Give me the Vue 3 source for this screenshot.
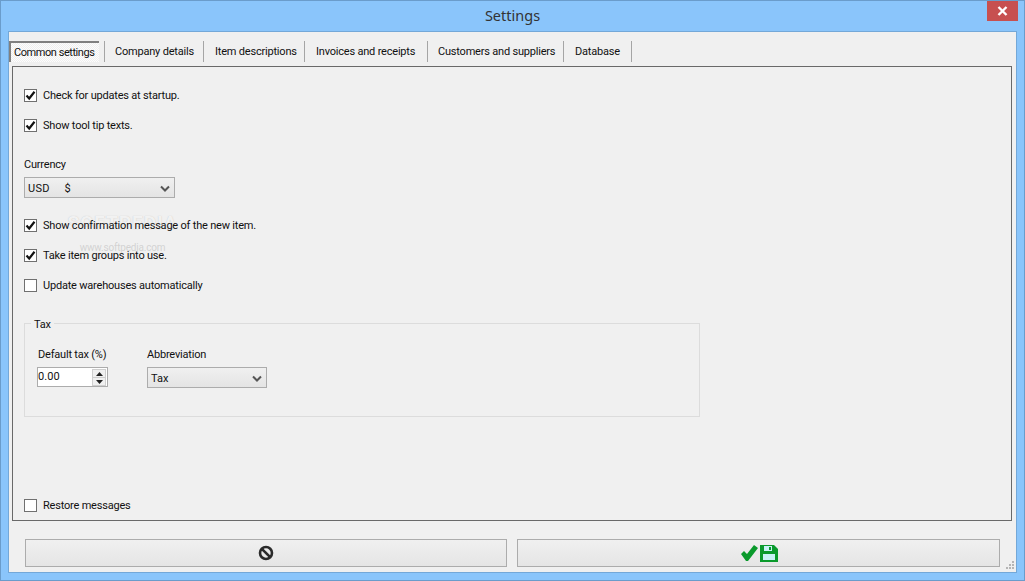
<script setup>
const tabs = [
  { label: 'Common settings', w: 90, active: true },
  { label: 'Company details', w: 100, pad: 10, first: true },
  { label: 'Item descriptions', w: 101, pad: 11 },
  { label: 'Invoices and receipts', w: 123, pad: 11 },
  { label: 'Customers and suppliers', w: 136, pad: 10 },
  { label: 'Database', w: 68, pad: 11 }
]
</script>

<template>
  <div class="window">
    <header class="titlebar">
      <span class="title">Settings</span>
      <button class="close" aria-label="Close">
        <svg width="11" height="10" viewBox="0 0 11 10"><path d="M1.5 1 9.5 9M9.5 1 1.5 9" stroke="#fff" stroke-width="2.4" fill="none"/></svg>
      </button>
    </header>
    <div class="client">
      <nav class="tabs">
        <div v-for="t in tabs" :key="t.label" class="tab" :class="{ active: t.active, first: t.first }" :style="{ width: t.w + 'px', paddingLeft: t.pad ? t.pad + 'px' : undefined }">
          <span>{{ t.label }}</span>
        </div>
      </nav>
      <main class="panel">
        <div class="watermark" aria-hidden="true">
          <span class="wm-big">SOFTPEDIA</span>
          <span class="wm-small">www.softpedia.com</span>
        </div>
        <label class="check first"><span class="box on"><svg width="11" height="11" viewBox="0 0 11 11"><path d="M1.5 5.5 4.2 8.5 9.5 1.8" stroke="#111" stroke-width="2.2" fill="none"/></svg></span>Check for updates at startup.</label>
        <label class="check"><span class="box on"><svg width="11" height="11" viewBox="0 0 11 11"><path d="M1.5 5.5 4.2 8.5 9.5 1.8" stroke="#111" stroke-width="2.2" fill="none"/></svg></span>Show tool tip texts.</label>

        <div class="field currency">
          <span class="lbl">Currency</span>
          <div class="select wide"><span>USD&nbsp;&nbsp;&nbsp;&nbsp;&nbsp;$</span><svg width="10" height="7" viewBox="0 0 10 7"><path d="M1 1.5 5 5.5 9 1.5" stroke="#555" stroke-width="2" fill="none"/></svg></div>
        </div>

        <label class="check after-select"><span class="box on"><svg width="11" height="11" viewBox="0 0 11 11"><path d="M1.5 5.5 4.2 8.5 9.5 1.8" stroke="#111" stroke-width="2.2" fill="none"/></svg></span>Show confirmation message of the new item.</label>
        <label class="check"><span class="box on"><svg width="11" height="11" viewBox="0 0 11 11"><path d="M1.5 5.5 4.2 8.5 9.5 1.8" stroke="#111" stroke-width="2.2" fill="none"/></svg></span>Take item groups into use.</label>
        <label class="check"><span class="box"></span>Update warehouses automatically</label>

        <section class="group">
          <span class="legend">Tax</span>
          <div class="group-row">
            <div class="field tax">
              <span class="lbl">Default tax (%)</span>
              <div class="spin">
                <span class="spin-val">0.00</span>
                <span class="spin-btns">
                  <span class="spin-btn"><svg width="7" height="4" viewBox="0 0 7 4"><path d="M3.5 0 7 4H0z" fill="#222"/></svg></span>
                  <span class="spin-btn"><svg width="7" height="4" viewBox="0 0 7 4"><path d="M0 0H7L3.5 4z" fill="#222"/></svg></span>
                </span>
              </div>
            </div>
            <div class="field abbr">
              <span class="lbl">Abbreviation</span>
              <div class="select narrow"><span>Tax</span><svg width="10" height="7" viewBox="0 0 10 7"><path d="M1 1.5 5 5.5 9 1.5" stroke="#555" stroke-width="2" fill="none"/></svg></div>
            </div>
          </div>
        </section>

        <label class="check restore"><span class="box"></span>Restore messages</label>
      </main>
      <footer class="actions">
        <button class="btn">
          <svg width="16" height="16" viewBox="0 0 16 16"><circle cx="8" cy="8" r="6" stroke="#2b2b2b" stroke-width="2.6" fill="none"/><path d="M3.8 3.8 12.2 12.2" stroke="#2b2b2b" stroke-width="2.6"/></svg>
        </button>
        <button class="btn">
          <svg width="38" height="18" viewBox="0 0 38 18">
            <path d="M1 10 4 7 7 10 14 1 18 4 8 17H6Z" fill="#0a9a2c"/>
            <path d="M20 1H34L38 5V18H20Z" fill="#0a9a2c"/>
            <rect x="23" y="10" width="12" height="6" fill="#c8f2f6"/>
            <rect x="24" y="2" width="8" height="5" fill="#c8f2f6"/>
            <rect x="29" y="3" width="2" height="3" fill="#0a9a2c"/>
          </svg>
        </button>
      </footer>
      <svg class="grip" width="10" height="10" viewBox="0 0 10 10" aria-hidden="true">
        <path d="M7 0h2v2H7zM4 3h2v2H4zM7 3h2v2H7zM1 6h2v2H1zM4 6h2v2H4zM7 6h2v2H7z" fill="#b5b5b5"/>
      </svg>
    </div>
  </div>
</template>

<style>
html, body { margin: 0; padding: 0; overflow: hidden; }
</style>

<style scoped>
.window {
  box-sizing: border-box;
  width: 1025px;
  height: 581px;
  background: #8ac5fb;
  border: 1px solid #6a9ccb;
  display: flex;
  flex-direction: column;
  font-family: Roboto, Lato, sans-serif;
  font-size: 11px;
  letter-spacing: -0.2px;
  color: #111;
}
.titlebar {
  height: 30px;
  flex: none;
  position: relative;
  display: flex;
  align-items: center;
  justify-content: center;
  padding-bottom: 2px;
  box-sizing: border-box;
}
.title { font-size: 14.5px; letter-spacing: 0; color: #333; font-family: "Noto Sans", sans-serif; }
.close {
  position: absolute;
  right: 6px;
  top: 0;
  width: 31px;
  height: 20px;
  padding: 0;
  border: 0;
  background: #c75050;
  display: flex;
  align-items: center;
  justify-content: center;
}
.client {
  box-sizing: border-box;
  flex: none;
  width: 1009px;
  height: 542px;
  margin-left: 7px;
  background: #f0f0f0;
  border: 1px solid #74a8d8;
  position: relative;
  padding: 8px 0 0 3px;
}
.tabs { display: flex; height: 26px; }
.tab {
  box-sizing: border-box;
  flex: none;
  height: 21px;
  margin-top: 1px;
  border-right: 1px solid #a5a5a5;
  line-height: 21px;
  white-space: nowrap;
}
.tab.first { border-left: 1px solid #a5a5a5; }
.tab.active {
  padding-left: 3px;
  height: 21px;
  line-height: 20px;
  letter-spacing: -0.45px;
  border-top: 2px solid #808080;
  border-left: 2px solid #808080;
  margin-left: -3px;
  margin-right: 5px;
  background-color: #f4f4f4;
  background-image: repeating-conic-gradient(#fdfdfd 0 25%, #efefef 0 50%);
  background-size: 2px 2px;
  border-right: 0;
}
.panel {
  box-sizing: border-box;
  width: 1000px;
  height: 455px;
  border: 1px solid #696969;
  position: relative;
  padding: 22px 0 0 11px;
  display: flex;
  flex-direction: column;
  align-items: flex-start;
}
.check {
  display: flex;
  align-items: center;
  height: 13px;
  gap: 6px;
  margin-top: 17px;
  white-space: nowrap;
  position: relative;
}
.check.first { margin-top: 0; }
.box {
  box-sizing: border-box;
  width: 13px;
  height: 13px;
  flex: none;
  background: #fff;
  border: 1px solid #707070;
  display: flex;
  align-items: center;
  justify-content: center;
}
.field { display: flex; flex-direction: column; align-items: flex-start; position: relative; }
.currency { margin-top: 25px; gap: 4px; }
.lbl { line-height: 16px; }
.select {
  box-sizing: border-box;
  height: 21px;
  background: linear-gradient(#f0f0f0, #e4e4e4);
  border: 1px solid #acacac;
  display: flex;
  align-items: center;
  justify-content: space-between;
  padding: 1px 4px 0 3px;
}
.select.wide { width: 151px; letter-spacing: 0.25px; }
.select.narrow { width: 120px; letter-spacing: 0; }
.after-select { margin-top: 21px; }
.group {
  box-sizing: border-box;
  width: 676px;
  height: 94px;
  margin-top: 31px;
  border: 1px solid #dcdcdc;
  position: relative;
  padding: 23px 0 0 13px;
}
.legend {
  position: absolute;
  left: 6px;
  top: -7px;
  padding: 0 3px;
  background: #f0f0f0;
  line-height: 16px;
}
.group-row { display: flex; }
.tax { width: 109px; gap: 4px; }
.abbr { gap: 4px; }
.spin {
  box-sizing: border-box;
  width: 71px;
  height: 20px;
  margin-left: -1px;
  background: #fff;
  border: 1px solid #acacac;
  display: flex;
  justify-content: space-between;
}
.spin-val { line-height: 17px; letter-spacing: 0.1px; }
.spin-btns { display: flex; flex-direction: column; width: 14px; margin: 1px; }
.spin-btn { flex: 1; display: flex; align-items: center; justify-content: center; background: #f0f0f0; border: 1px solid #cfcfcf; margin-bottom: -1px; }
.restore { margin-top: 82px; }
.watermark {
  position: absolute;
  left: 52px;
  top: 145px;
  display: flex;
  flex-direction: column;
  align-items: center;
  width: 115px;
  color: rgba(255, 255, 255, 0.8);
  pointer-events: none;
}
.wm-big { font-size: 19px; font-weight: 700; line-height: 22px; letter-spacing: 1px; text-shadow: 0 0 1px rgba(170, 170, 170, 0.7); }
.wm-small { font-size: 10px; line-height: 14px; margin-top: 7px; color: rgba(190, 190, 190, 0.6); }
.actions {
  display: flex;
  gap: 10px;
  margin-top: 18px;
  padding-left: 13px;
}
.btn {
  box-sizing: border-box;
  width: 482px;
  height: 28px;
  padding: 0;
  background: linear-gradient(#f0f0f0, #e5e5e5);
  border: 1px solid #acacac;
  display: flex;
  align-items: center;
  justify-content: center;
}
.btn + .btn { width: 483px; }
.grip { position: absolute; right: 1px; bottom: 1px; }
</style>
